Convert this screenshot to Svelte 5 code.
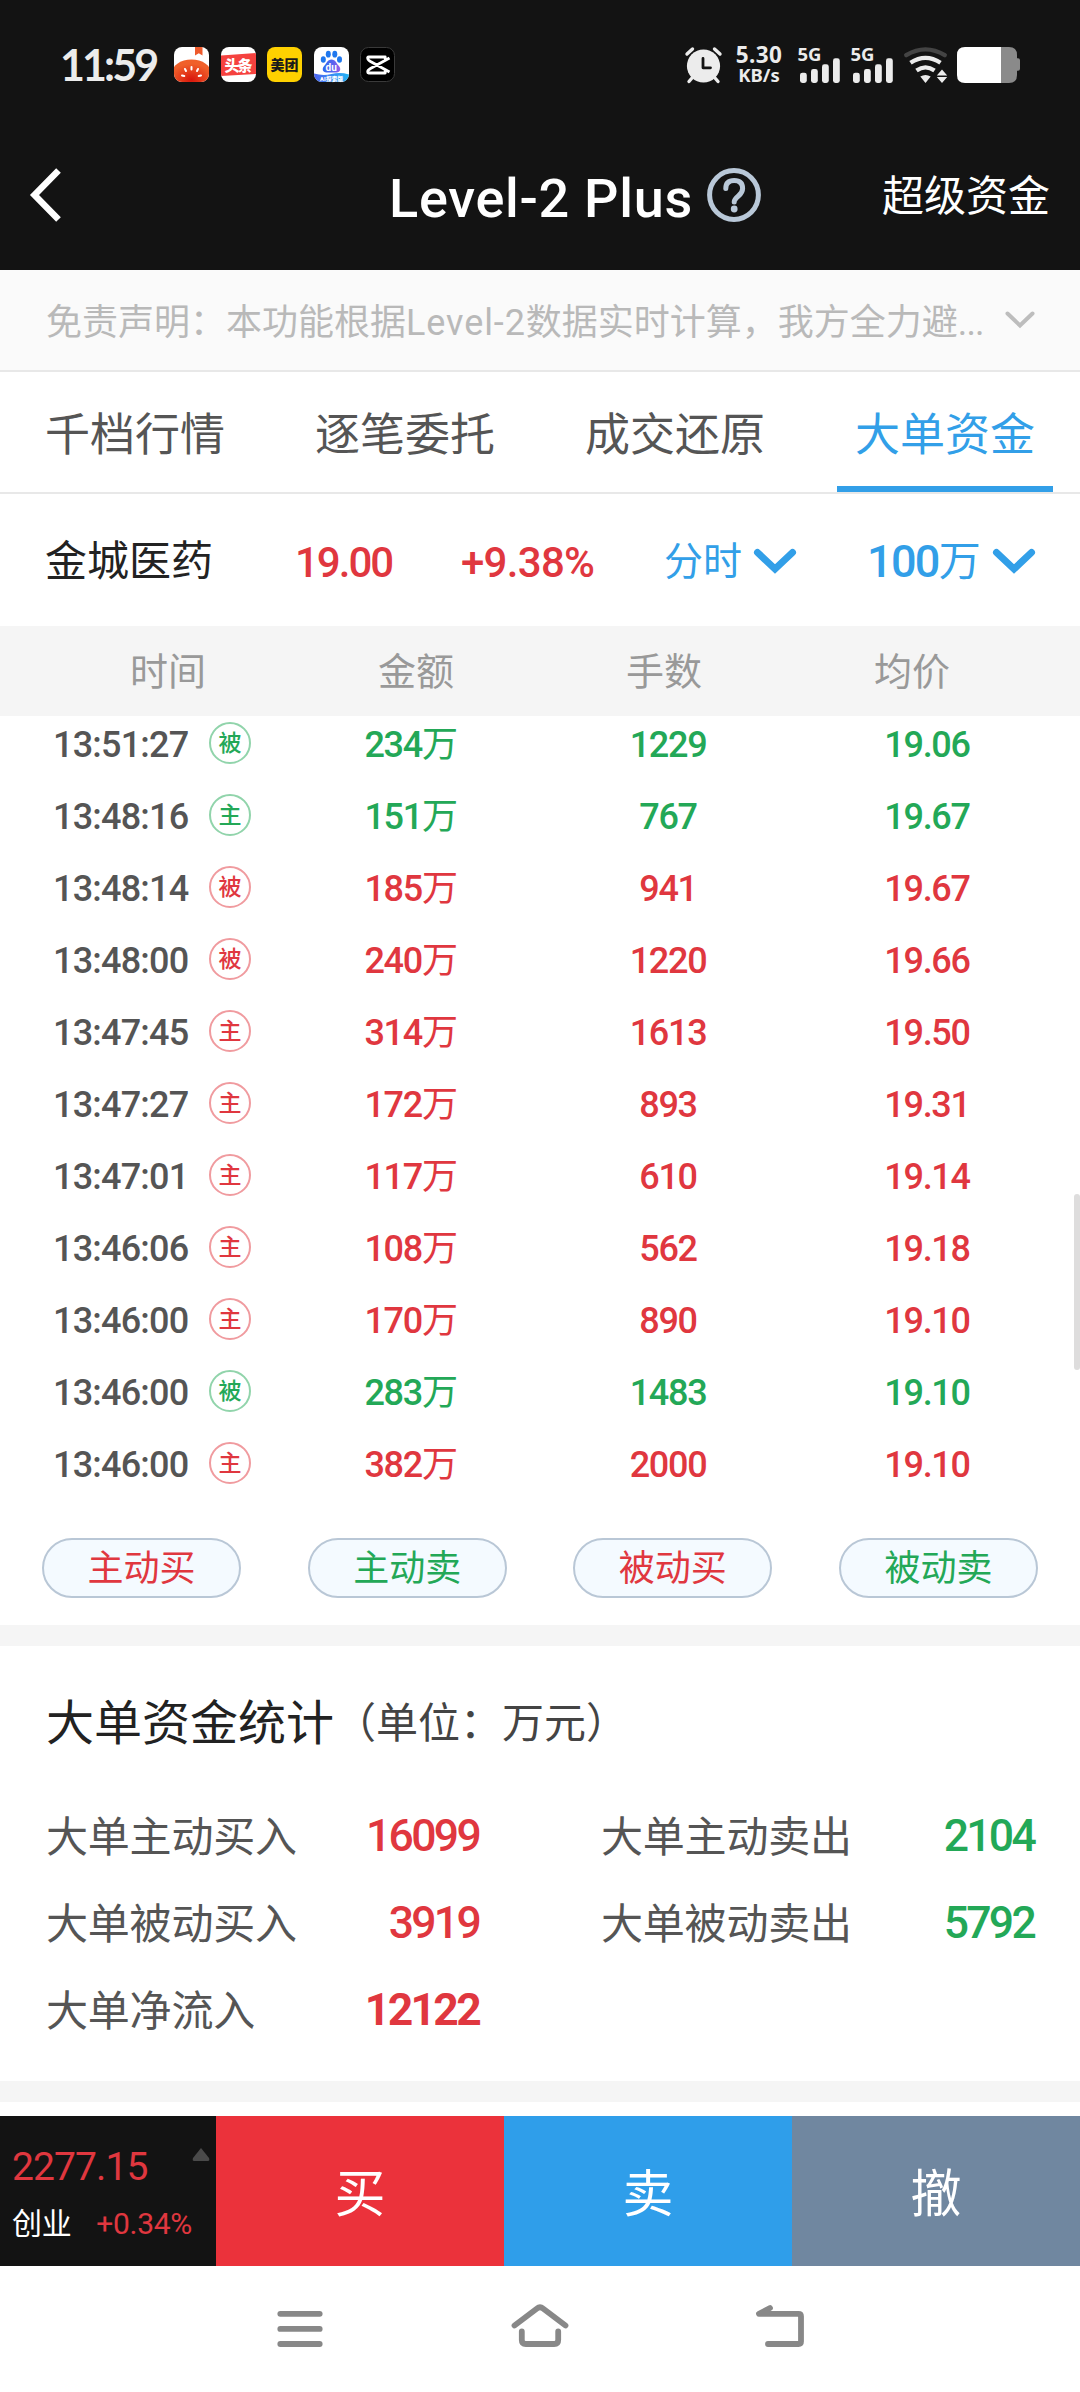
<script lang="ts">
    type Tone = "up" | "down";

    interface Deal {
        time: string;
        kind: "主" | "被";
        tone: Tone;
        amount: number;
        lots: number;
        price: string;
    }

    const tabs = ["千档行情", "逐笔委托", "成交还原", "大单资金"];
    const columns = ["时间", "金额", "手数", "均价"];
    let activeTab = $state("大单资金");

    const deals: Deal[] = [
        { time: "13:51:27", kind: "被", tone: "down", amount: 234, lots: 1229, price: "19.06" },
        { time: "13:48:16", kind: "主", tone: "down", amount: 151, lots: 767, price: "19.67" },
        { time: "13:48:14", kind: "被", tone: "up", amount: 185, lots: 941, price: "19.67" },
        { time: "13:48:00", kind: "被", tone: "up", amount: 240, lots: 1220, price: "19.66" },
        { time: "13:47:45", kind: "主", tone: "up", amount: 314, lots: 1613, price: "19.50" },
        { time: "13:47:27", kind: "主", tone: "up", amount: 172, lots: 893, price: "19.31" },
        { time: "13:47:01", kind: "主", tone: "up", amount: 117, lots: 610, price: "19.14" },
        { time: "13:46:06", kind: "主", tone: "up", amount: 108, lots: 562, price: "19.18" },
        { time: "13:46:00", kind: "主", tone: "up", amount: 170, lots: 890, price: "19.10" },
        { time: "13:46:00", kind: "被", tone: "down", amount: 283, lots: 1483, price: "19.10" },
        { time: "13:46:00", kind: "主", tone: "up", amount: 382, lots: 2000, price: "19.10" },
    ];

    const filters: { label: string; tone: Tone }[] = [
        { label: "主动买", tone: "up" },
        { label: "主动卖", tone: "down" },
        { label: "被动买", tone: "up" },
        { label: "被动卖", tone: "down" },
    ];

    const stats: { label: string; value: number; tone: Tone; total?: boolean }[] = [
        { label: "大单主动买入", value: 16099, tone: "up" },
        { label: "大单主动卖出", value: 2104, tone: "down" },
        { label: "大单被动买入", value: 3919, tone: "up" },
        { label: "大单被动卖出", value: 5792, tone: "down" },
        { label: "大单净流入", value: 12122, tone: "up", total: true },
    ];
</script>

{#snippet signal()}
    <svg class="signal" viewBox="0 0 42 36">
        <text x="-0.5" y="14" textLength="24" lengthAdjust="spacingAndGlyphs">5G</text>
        <rect x="2" y="25.7" width="6.8" height="10.3" rx="2.4" />
        <rect x="13" y="22" width="6.8" height="14" rx="2.4" />
        <rect x="24" y="17.3" width="6.8" height="18.7" rx="2.4" />
        <rect x="35" y="11.3" width="6.8" height="24.7" rx="2.4" />
    </svg>
{/snippet}

{#snippet chevron()}
    <svg class="chevron" viewBox="0 0 42 24">
        <path d="M3.5 3.5 21 20 38.5 3.5" />
    </svg>
{/snippet}

<div class="screen">
    <header class="top">
        <div class="status">
            <span class="status__clock">11:59</span>
            <div class="status__apps">
                <svg viewBox="0 0 35 35">
                    <defs>
                        <clipPath id="app-shape"><rect width="35" height="35" rx="8" /></clipPath>
                        <radialGradient id="tomato" cx="0.5" cy="0.7" r="0.55">
                            <stop offset="0" stop-color="#d9160c" />
                            <stop offset="1" stop-color="#f0602a" />
                        </radialGradient>
                    </defs>
                    <g clip-path="url(#app-shape)">
                        <rect width="35" height="35" fill="#fff" />
                        <path d="M21 0h7.5v8.5l-3.7-2.3L21 8.5z" fill="#ee5a2c" />
                        <ellipse cx="17.5" cy="27" rx="20" ry="14.5" fill="url(#tomato)" />
                        <g stroke="#fff" stroke-width="2" stroke-linecap="round">
                            <path d="M17.5 20v2.5M11 22l1 2M24 22l-1 2M8 28.5l2.3.5M27 28.5l-2.3.5" />
                        </g>
                    </g>
                </svg>
                <svg viewBox="0 0 35 35">
                    <g clip-path="url(#app-shape)">
                        <rect width="35" height="35" fill="#fff" />
                        <path d="M0 8.5 35 6v21L0 29z" fill="#f5423f" />
                    </g>
                    <text x="3.5" y="23.5" font-size="15" font-weight="900" fill="#fff" textLength="28">头条</text>
                </svg>
                <svg viewBox="0 0 35 35">
                    <rect width="35" height="35" rx="8" fill="#ffd100" />
                    <text x="3.5" y="22.8" font-size="14" font-weight="900" fill="#1a1a1a" textLength="28">美团</text>
                </svg>
                <svg viewBox="0 0 35 35">
                    <defs>
                        <linearGradient id="paw" x1="0" x2="1">
                            <stop offset="0" stop-color="#2a6cf0" />
                            <stop offset="0.6" stop-color="#5a62ee" />
                            <stop offset="1" stop-color="#9a5fe6" />
                        </linearGradient>
                        <linearGradient id="wave" x1="0" x2="1">
                            <stop offset="0" stop-color="#4d63f0" />
                            <stop offset="1" stop-color="#22b4f5" />
                        </linearGradient>
                    </defs>
                    <g clip-path="url(#app-shape)">
                        <rect width="35" height="35" fill="#fff" />
                        <g fill="#1f77ee">
                            <ellipse cx="9.3" cy="12.5" rx="2.5" ry="3.2" />
                            <ellipse cx="14.3" cy="7.2" rx="2.5" ry="3.4" />
                            <ellipse cx="20.8" cy="7.2" rx="2.5" ry="3.4" />
                            <ellipse cx="25.5" cy="12.5" rx="2.5" ry="3.2" />
                        </g>
                        <path d="M17.5 12.5c4 0 5 4 7 6 3 3 2 7-2 7h-10c-4 0-5-4-2-7 2-2 3-6 7-6z" fill="url(#paw)" />
                        <path d="M0 26.5q9 2.5 17.5.5t17.5.5V35H0z" fill="url(#wave)" />
                    </g>
                    <text x="11.5" y="23.8" font-size="10" font-weight="700" fill="#fff">du</text>
                    <text x="6" y="33.5" font-size="5.5" font-weight="900" fill="#fff" textLength="23">AI探索版</text>
                </svg>
                <svg viewBox="0 0 35 35">
                    <rect x="0.5" y="0.5" width="34" height="34" rx="8" fill="#000" stroke="#3a3a3a" />
                    <path d="M29.5 11 10.5 21.5q-3 1.8-2.8 3.5 0 1 1 1h16.500v-3M29.5 25 10.5 14.5q-3-1.8-2.8-3.5 0-1 1-1h16.500v3" fill="none" stroke="#fff" stroke-width="2.8" stroke-linejoin="round" />
                </svg>
            </div>
            <div class="status__system">
                <svg class="alarm" viewBox="0 0 37 36">
                    <g stroke="#ececec" stroke-width="3.4" stroke-linecap="round">
                        <path d="M2 7 7.5 2M35 7 29.5 2M7 31l-3 3.5M30 31l3 3.5" />
                    </g>
                    <circle cx="18.5" cy="19" r="16.6" fill="#ececec" />
                    <path d="M18 11.5v9.3h7.5" fill="none" stroke="#131313" stroke-width="2.8" stroke-linecap="round" stroke-linejoin="round" />
                </svg>
                <div class="speed">
                    <span>5.30</span>
                    <span class="speed__unit">KB/s</span>
                </div>
                {@render signal()}
                {@render signal()}
                <svg class="wifi" viewBox="0 0 44 36" fill="none" stroke-width="4.3">
                    <path d="M2.2 8.2Q21.5-3.5 40.8 8.2" stroke="#444" stroke-linecap="round" />
                    <path d="M6.5 15.8Q21.5 6 36.5 15.8M12.5 23.5Q21.5 17.2 30.5 23.5" stroke="#ececec" />
                    <path d="M16.3 29.5q5.2-3 10.4 0L21.5 36z" fill="#ececec" />
                    <path d="M38 22.5l5.2 6H32.8zM38 36l5.2-6H32.8z" fill="#ececec" />
                </svg>
                <svg class="battery" viewBox="0 0 63 36">
                    <path d="M44 0h8q8 0 8 8v3.3h1q2 0 2 2v8.4q0 2-2 2h-1V28q0 8-8 8h-8z" fill="#8a8a8a" />
                    <path d="M8 0h36v36H8q-8 0-8-8V8q0-8 8-8z" fill="#fff" />
                </svg>
            </div>
        </div>

        <nav class="navbar">
            <svg class="navbar__back" viewBox="0 0 32 56">
                <path d="M28.5 3.5 4.5 28l24 24.5" />
            </svg>
            <h1>
                <span>Level-2 Plus</span>
                <svg class="help" viewBox="0 0 54 54">
                    <circle cx="27" cy="27" r="24.4" />
                    <path d="M18.8 20.5q0-8 8.4-8t8.4 8q0 4-4.2 7.5T27.2 34" />
                    <circle class="help__dot" cx="27.2" cy="41" r="3.4" />
                </svg>
            </h1>
            <span class="navbar__action">超级资金</span>
        </nav>
    </header>

    <div class="notice">
        <p>免责声明：本功能根据<span class="notice__latin">Level-2</span>数据实时计算，我方全力避<span class="notice__dots">...</span></p>
        <svg viewBox="0 0 30 18"><path d="M2.5 2.5 15 14.5 27.5 2.5" /></svg>
    </div>

    <div class="tabs">
        {#each tabs as tab}
            <button class="tab" class:tab--active={tab === activeTab} onclick={() => (activeTab = tab)}>
                {tab}
            </button>
        {/each}
    </div>

    <div class="stock">
        <span class="stock__name">金城医药</span>
        <span class="stock__price up">19.00</span>
        <span class="stock__change up">+9.38%</span>
        <span class="stock__period">分时 {@render chevron()}</span>
        <span class="stock__limit"><b>100</b>万 {@render chevron()}</span>
    </div>

    <div class="table-head">
        {#each columns as column}
            <span>{column}</span>
        {/each}
    </div>

    <div class="deals">
        {#each deals as deal}
            <div class="deal">
                <div class="deal__time">
                    <span>{deal.time}</span>
                    <i class="badge {deal.tone}">{deal.kind}</i>
                </div>
                <span class="deal__amount {deal.tone}">{deal.amount}<em>万</em></span>
                <span class="deal__number {deal.tone}">{deal.lots}</span>
                <span class="deal__number {deal.tone}">{deal.price}</span>
            </div>
        {/each}
        <div class="scrollbar"></div>
    </div>

    <div class="filters">
        {#each filters as filter}
            <button class="filter {filter.tone}">{filter.label}</button>
        {/each}
    </div>

    <section class="summary">
        <h2>大单资金统计<small>（单位：万元）</small></h2>
        <dl>
            {#each stats as stat}
                <div class="stat">
                    <dt>{stat.label}</dt>
                    <dd class={stat.tone} class:total={stat.total}>{stat.value}</dd>
                </div>
            {/each}
        </dl>
    </section>

    <footer class="trade">
        <div class="index">
            <div class="index__row">
                <span>2277.15</span>
                <svg viewBox="0 0 18 14"><path d="M9 1 17 11q1 3-1 3H2q-2 0-1-3z" /></svg>
            </div>
            <div class="index__row index__row--small">
                <span>创业</span>
                <span class="index__change">+0.34%</span>
            </div>
        </div>
        <button class="trade__button trade__button--buy">买</button>
        <button class="trade__button trade__button--sell">卖</button>
        <button class="trade__button trade__button--cancel">撤</button>
    </footer>

    <div class="system-nav">
        <svg viewBox="0 0 60 60"><path d="M10.3 15.8h39.4M10.3 30.9h39.4M10.3 46h39.4" /></svg>
        <svg viewBox="0 0 60 60"><path d="M4.5 27.5 27 10.5q3-2.5 6 0l22.5 17M11.8 33.5V42q0 4 4 4h28.4q4 0 4-4v-8.5" /></svg>
        <svg viewBox="0 0 60 60"><path d="M20 10 9 15.800h39.500q2.500 0 2.500 2.500v25.200q0 2.500-2.500 2.500H18" /></svg>
    </div>
</div>

<style>
    :global(body) {
        margin: 0;
        background: #fff;
    }

    .screen {
        width: 1080px;
        height: 2392px;
        display: flex;
        flex-direction: column;
        overflow: hidden;
        background: #fff;
        color: #555;
        font-family: Roboto, "Noto Sans CJK SC", sans-serif;
    }

    .screen > * {
        flex-shrink: 0;
    }

    button {
        border: 0;
        padding: 0;
        margin: 0;
        background: none;
        color: inherit;
        font: inherit;
    }

    svg {
        display: block;
        overflow: visible;
    }

    .up {
        color: #e0373f;
    }

    .down {
        color: #23a857;
    }

    /* status bar and title */
    .top {
        height: 270px;
        background: #131313;
        color: #fff;
    }

    .status {
        box-sizing: border-box;
        height: 120px;
        padding: 47px 60px 0 60px;
        display: flex;
        align-items: flex-start;
    }

    .status__clock {
        width: 114px;
        font-family: Lato, sans-serif;
        font-size: 43px;
        font-weight: 700;
        line-height: 36px;
        letter-spacing: -2.9px;
        color: #ececec;
    }

    .status__apps {
        display: flex;
        gap: 11.6px;
    }

    .status__apps svg {
        width: 35px;
        height: 35px;
    }

    .status__system {
        margin-left: auto;
        display: flex;
    }

    .alarm {
        width: 37px;
        height: 36px;
        margin-right: 14px;
    }

    .speed {
        width: 46px;
        height: 36px;
        margin-right: 16px;
        display: flex;
        flex-direction: column;
        align-items: center;
        font-family: "Noto Sans", sans-serif;
        font-size: 22.5px;
        font-weight: 700;
        line-height: 16px;
        letter-spacing: 0.4px;
        color: #ececec;
    }

    .speed__unit {
        font-size: 18.5px;
        line-height: 23px;
        letter-spacing: 0;
    }

    .signal {
        width: 42px;
        height: 36px;
        margin-right: 11px;
        fill: #ececec;
        font-family: "Noto Sans", sans-serif;
        font-size: 18.5px;
        font-weight: 700;
    }

    .wifi {
        width: 44px;
        height: 36px;
        margin-right: 9px;
    }

    .battery {
        width: 63px;
        height: 36px;
    }

    .navbar {
        box-sizing: border-box;
        height: 150px;
        padding: 0 30px;
        display: grid;
        grid-template-columns: 1fr auto 1fr;
        align-items: center;
    }

    .navbar__back {
        width: 32px;
        height: 56px;
        fill: none;
        stroke: #fff;
        stroke-width: 6.5;
    }

    h1 {
        margin: 0 0 0 70px;
        display: flex;
        align-items: center;
        gap: 14px;
        font-size: 54px;
        font-weight: 500;
        line-height: 60px;
        letter-spacing: 0.7px;
    }

    h1 span {
        padding-top: 8px;
    }

    .help {
        width: 54px;
        height: 54px;
        fill: none;
        stroke: #b9c8d8;
        stroke-width: 5;
        stroke-linecap: round;
    }

    .help__dot {
        fill: #b9c8d8;
        stroke: none;
    }

    .navbar__action {
        justify-self: end;
        padding-top: 4px;
        font-size: 42px;
        line-height: 60px;
    }

    .notice {
        box-sizing: border-box;
        height: 102px;
        padding: 0 45px;
        display: flex;
        align-items: center;
        justify-content: space-between;
        background: #fafafa;
        border-bottom: 2px solid #e8e8e8;
        font-size: 36px;
        color: #b9b9b9;
    }

    .notice p {
        margin: 0;
        padding: 5px 0 0 1px;
        white-space: nowrap;
        line-height: 50px;
    }

    .notice__latin {
        letter-spacing: 0.9px;
    }

    .notice__dots {
        letter-spacing: -0.9px;
    }

    .notice svg {
        width: 30px;
        height: 18px;
        fill: none;
        stroke: #bdbdbd;
        stroke-width: 4;
        stroke-linecap: round;
    }

    .tabs {
        display: grid;
        grid-template-columns: repeat(4, 1fr);
        justify-items: center;
        height: 120px;
        border-bottom: 2px solid #e8e8e8;
    }

    .tab {
        box-sizing: border-box;
        width: 216px;
        height: 120px;
        padding-bottom: 2px;
        border-top: 6px solid transparent;
        border-bottom: 6px solid transparent;
        font-size: 45px;
        white-space: nowrap;
    }

    .tab--active {
        color: #329fe8;
        border-bottom-color: #329fe8;
    }

    .stock {
        box-sizing: border-box;
        height: 132px;
        padding: 0 44px 0 45px;
        display: grid;
        grid-template-columns: 250px 166px 203px 203px 1fr;
        align-items: center;
        font-size: 42px;
        line-height: 60px;
    }

    .stock__name {
        padding-top: 4px;
        color: #222;
    }

    .stock__price,
    .stock__change {
        padding-top: 5px;
        font-weight: 500;
        letter-spacing: -2px;
    }

    .stock__change {
        letter-spacing: -0.7px;
    }

    .stock__period,
    .stock__limit {
        padding-top: 4px;
        display: flex;
        align-items: center;
        color: #329fe8;
    }

    .stock__period {
        font-size: 39px;
    }

    .stock__limit {
        font-size: 42px;
    }

    .stock__limit b {
        font-size: 45px;
        font-weight: 500;
        letter-spacing: -1.7px;
    }

    .chevron {
        width: 42px;
        height: 24px;
        margin: 0 0 2px 12px;
        fill: none;
        stroke: currentColor;
        stroke-width: 7;
        stroke-linecap: round;
    }

    /* big order list */
    .table-head {
        box-sizing: border-box;
        height: 90px;
        padding: 0 44px 5px;
        display: grid;
        grid-template-columns: repeat(4, 1fr);
        align-items: center;
        background: #f5f5f5;
        color: #999;
        font-size: 38px;
        text-align: center;
    }

    .deals {
        position: relative;
        height: 784px;
        display: flex;
        flex-direction: column;
        justify-content: flex-end;
        overflow: hidden;
    }

    .deal {
        box-sizing: border-box;
        height: 72px;
        flex-shrink: 0;
        padding: 2px 22px 0;
        display: grid;
        grid-template-columns: repeat(4, 1fr);
        align-items: center;
        text-align: center;
        font-size: 36px;
        font-weight: 500;
        line-height: 50px;
        letter-spacing: -1.3px;
    }

    .deal__time {
        display: flex;
        align-items: center;
        padding-left: 31px;
        letter-spacing: -0.8px;
    }

    .deal__time span {
        width: 135px;
        text-align: left;
    }

    .deal__number {
        padding-right: 3px;
    }

    .badge {
        box-sizing: border-box;
        width: 42px;
        height: 42px;
        margin: 0 0 4px 21px;
        border: 2px solid color-mix(in srgb, currentColor 50%, white);
        border-radius: 50%;
        font-size: 23px;
        font-style: normal;
        font-weight: 500;
        line-height: 39px;
        letter-spacing: 0;
    }

    .deal__amount em {
        font-style: normal;
        font-weight: 400;
    }

    .scrollbar {
        position: absolute;
        top: 478px;
        right: 0;
        width: 6px;
        height: 176px;
        border-radius: 3px;
        background: #dedddd;
    }

    .filters {
        box-sizing: border-box;
        height: 125px;
        padding: 38px 42px 0;
        display: flex;
        justify-content: space-between;
    }

    .filter {
        box-sizing: border-box;
        width: 199px;
        height: 60px;
        border: 2px solid #b9c7d6;
        border-radius: 30px;
        padding-top: 2px;
        background: #f4faff;
        font-size: 36px;
        line-height: 54px;
    }

    .summary {
        box-sizing: border-box;
        height: 477px;
        border-top: 21px solid #f5f5f5;
        border-bottom: 21px solid #f5f5f5;
        padding: 0 45px 0 46px;
    }

    h2 {
        margin: 46px 0 36px;
        font-size: 48px;
        font-weight: 400;
        line-height: 64px;
        color: #222;
    }

    small {
        font-size: 42px;
        line-height: 1;
        vertical-align: 2px;
        color: #444;
    }

    dl {
        margin: 0;
        display: grid;
        grid-template-columns: 434px 434px;
        column-gap: 121px;
    }

    .stat {
        height: 87px;
        display: flex;
        align-items: center;
        justify-content: space-between;
        font-size: 42px;
    }

    dt {
        padding-bottom: 5px;
        letter-spacing: -0.2px;
    }

    dd {
        margin: 0 1px 0 0;
        font-size: 44.5px;
        font-weight: 500;
        letter-spacing: -2.7px;
    }

    dd.total {
        font-weight: 700;
    }

    .trade {
        display: flex;
        height: 150px;
        margin-top: 14px;
    }

    .index {
        box-sizing: border-box;
        width: 216px;
        padding: 26px 6px 0 12px;
        background: #131313;
        color: #e0373f;
    }

    .index__row {
        display: flex;
        justify-content: space-between;
        height: 50px;
        line-height: 50px;
        font-size: 39px;
        letter-spacing: -0.9px;
    }

    .index__row svg {
        width: 18px;
        height: 14px;
        margin-top: 5px;
        fill: #4a4a4a;
    }

    .index__row--small {
        margin-top: 7px;
        padding-right: 18px;
        font-size: 30px;
        letter-spacing: -0.3px;
        color: #fff;
    }

    .index__change {
        color: #e0373f;
    }

    .trade__button {
        flex: 1;
        padding-bottom: 3px;
        font-size: 51px;
        color: #fff;
    }

    .trade__button--buy {
        background: #eb323b;
    }

    .trade__button--sell {
        background: #2f9eea;
    }

    .trade__button--cancel {
        background: #7087a0;
    }

    .system-nav {
        height: 126px;
        padding-top: 32px;
        box-sizing: border-box;
        display: flex;
        justify-content: center;
        gap: 180px;
    }

    .system-nav svg {
        width: 60px;
        height: 60px;
        fill: none;
        stroke: #888;
        stroke-width: 5.8;
        stroke-linecap: round;
        stroke-linejoin: round;
    }
</style>
